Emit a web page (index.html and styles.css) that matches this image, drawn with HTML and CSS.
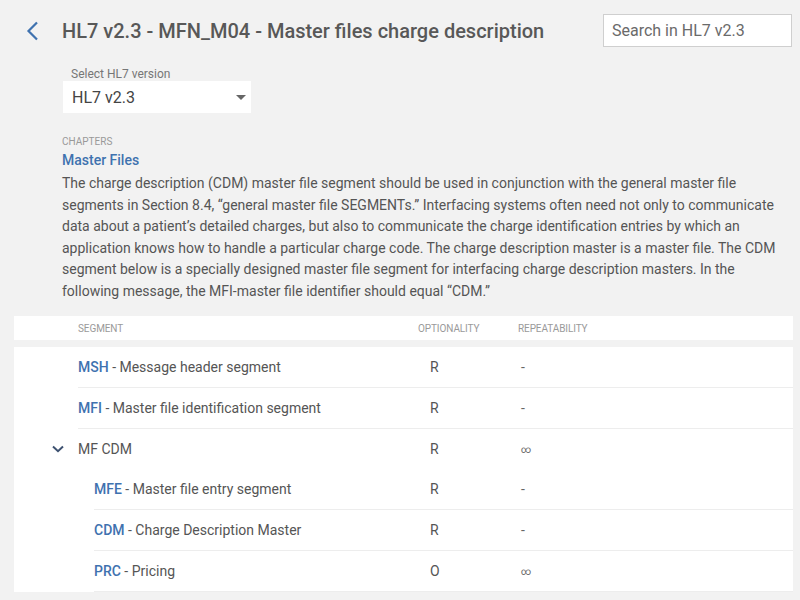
FILE: index.html
```html
<!DOCTYPE html>
<html>
<head>
<meta charset="utf-8">
<link rel="stylesheet" href="styles.css">
</head>
<body>
<header class="topbar">
  <a class="back" href="#">
    <svg width="13" height="20" viewBox="0 0 13 20"><path d="M11 1.5 L2.5 10 L11 18.5" fill="none" stroke="#3f72af" stroke-width="2.2"/></svg>
  </a>
  <h1 class="title">HL7 v2.3 - MFN_M04 - Master files charge description</h1>
  <div class="search">Search in HL7 v2.3</div>
</header>

<section class="version">
  <div class="version-label">Select HL7 version</div>
  <div class="select">
    <span>HL7 v2.3</span>
    <span class="caret"></span>
  </div>
</section>

<section class="chapter">
  <div class="chapter-kicker">CHAPTERS</div>
  <a class="chapter-link" href="#">Master Files</a>
  <p class="chapter-text">The charge description (CDM) master file segment should be used in conjunction with the general master file segments in Section 8.4, “general master file SEGMENTs.” Interfacing systems often need not only to communicate data about a patient’s detailed charges, but also to communicate the charge identification entries by which an application knows how to handle a particular charge code. The charge description master is a master file. The CDM segment below is a specially designed master file segment for interfacing charge description masters. In the following message, the MFI-master file identifier should equal “CDM.”</p>
</section>

<div class="thead">
  <span></span>
  <span>Segment</span>
  <span>Optionality</span>
  <span>Repeatability</span>
</div>

<div class="tbody">
  <div class="row">
    <div class="indent"></div>
    <div class="line"><span class="seg"><b>MSH</b> - Message header segment</span><span>R</span><span class="rep">-</span></div>
  </div>
  <div class="row">
    <div class="indent"></div>
    <div class="line"><span class="seg"><b>MFI</b> - Master file identification segment</span><span>R</span><span class="rep">-</span></div>
  </div>
  <div class="row group">
    <div class="indent">
      <svg class="chev" width="12" height="8" viewBox="0 0 12 8"><path d="M1 1.5 L6 6.2 L11 1.5" fill="none" stroke="#3d5170" stroke-width="2"/></svg>
    </div>
    <div class="line"><span class="seg">MF CDM</span><span>R</span><span class="rep inf">∞</span></div>
  </div>
  <div class="row nested">
    <div class="indent"></div>
    <div class="line"><span class="seg"><b>MFE</b> - Master file entry segment</span><span>R</span><span class="rep">-</span></div>
  </div>
  <div class="row nested">
    <div class="indent"></div>
    <div class="line"><span class="seg"><b>CDM</b> - Charge Description Master</span><span>R</span><span class="rep">-</span></div>
  </div>
  <div class="row nested">
    <div class="indent"></div>
    <div class="line"><span class="seg"><b>PRC</b> - Pricing</span><span>O</span><span class="rep inf">∞</span></div>
  </div>
</div>
</body>
</html>
```

FILE: styles.css
```css
html, body {
  margin: 0;
  padding: 0;
  background: #f2f2f2;
  font-family: Roboto, "Liberation Sans", sans-serif;
  color: #555;
}

.topbar {
  display: flex;
  align-items: center;
  height: 33px;
  padding: 14px 8px 0 26px;
}

.back {
  width: 36px;
  display: flex;
  align-items: center;
  margin-top: 1px;
}

.title {
  flex: 1;
  margin: 0;
  font-size: 20px;
  font-weight: 500;
  color: #585858;
  line-height: 24px;
  margin-top: 1px;
}

.search {
  width: 189px;
  height: 33px;
  box-sizing: border-box;
  background: #fff;
  border: 1px solid #cfcfcf;
  padding: 0 8px;
  font-size: 16px;
  line-height: 31px;
  color: #6a6a6a;
}

.version {
  margin: 21px 0 0 63px;
}

.version-label {
  padding-left: 8px;
  font-size: 12px;
  line-height: 13px;
  color: #777;
}

.select {
  width: 188px;
  height: 32px;
  box-sizing: border-box;
  background: #fff;
  display: flex;
  align-items: center;
  justify-content: space-between;
  padding: 0 5px 0 9px;
  font-size: 16px;
  color: #444;
}

.caret {
  width: 0;
  height: 0;
  border-left: 5px solid transparent;
  border-right: 5px solid transparent;
  border-top: 5px solid #666;
  margin-top: 1px;
}

.chapter {
  margin: 23px 18px 0 62px;
}

.chapter-kicker {
  font-size: 10px;
  line-height: 12px;
  color: #999;
}

.chapter-link {
  display: block;
  margin-top: 2px;
  font-size: 14px;
  font-weight: 500;
  line-height: 20px;
  color: #3f72af;
  text-decoration: none;
}

.chapter-text {
  margin: 3px 0 0;
  font-size: 14px;
  line-height: 21.5px;
  color: #555;
}

.thead {
  margin: 14px 7px 0 14px;
  height: 24px;
  background: #fff;
  display: grid;
  grid-template-columns: 64px 1fr 100px 275px;
  align-items: center;
  font-size: 10px;
  text-transform: uppercase;
  color: #9a9a9a;
  letter-spacing: -0.1px;
}

.tbody {
  margin: 7px 7px 0 14px;
  background: #fff;
}

.row {
  display: flex;
  height: 41px;
}

.row.group {
  height: 40px;
}

.indent {
  width: 64px;
  display: flex;
  align-items: center;
  padding-left: 38px;
  box-sizing: border-box;
}

.nested .indent {
  width: 80px;
}

.line {
  flex: 1;
  display: grid;
  grid-template-columns: 1fr 91px 272px;
  align-items: center;
  border-bottom: 1px solid #ededed;
  font-size: 14px;
  color: #555;
}

.group .line {
  border-bottom: none;
}

.seg b {
  font-weight: 500;
  color: #3f72af;
}

.rep {
  color: #666;
}

.inf {
  font-size: 10px;
}
```
